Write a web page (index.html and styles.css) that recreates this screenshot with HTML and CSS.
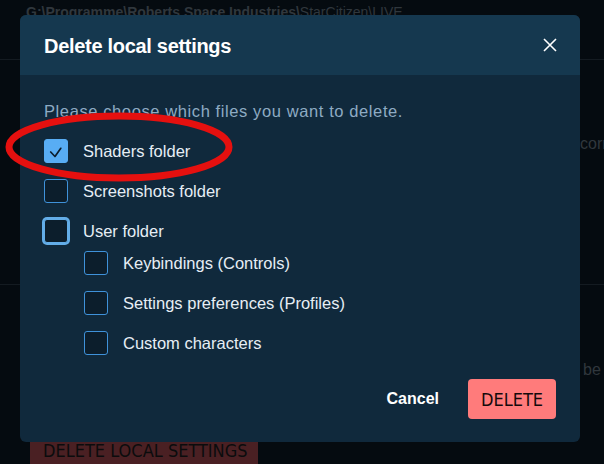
FILE: index.html
```html
<!DOCTYPE html>
<html lang="en">
<head>
    <meta charset="UTF-8">
    <meta name="viewport" content="width=device-width, initial-scale=1.0">
    <title>Delete local settings</title>
    <link rel="stylesheet" href="styles.css">
</head>
<body>
    <div class="app">
        <div class="path"><b>G:\Programme\Roberts Space Industries\</b>StarCitizen\LIVE</div>
        <hr class="rule">
        <div class="note"><span>Removing cached shaders can fix rendering issues and</span><span>corrupted files.</span></div>
        <hr class="rule rule-low">
        <div class="note note-low"><span>Your keybindings and characters will</span><span>be lost.</span></div>
        <button class="btn-reset">DELETE LOCAL SETTINGS</button>
    </div>

    <div class="backdrop">
        <div class="dialog">
            <div class="dialog-head">
                <h2>Delete local settings</h2>
                <button class="close" aria-label="Close">
                    <svg width="14" height="14" viewBox="0 0 14 14"><path d="M1 1 L13 13 M13 1 L1 13" stroke="#fff" stroke-width="1.6" fill="none"/></svg>
                </button>
            </div>
            <div class="dialog-body">
                <p class="intro">Please choose which files you want to delete.</p>
                <div class="options">
                    <label class="option">
                        <span class="box checked">
                            <svg width="24" height="24" viewBox="0 0 24 24"><path d="M6.7 13 L11 17.5 L16.8 9.3" stroke="#0c1f30" stroke-width="1.7" fill="none" stroke-linecap="round" stroke-linejoin="round"/></svg>
                        </span>
                        Shaders folder
                    </label>
                    <label class="option"><span class="box"></span>Screenshots folder</label>
                    <label class="option"><span class="box focus"></span>User folder</label>
                    <div class="options sub">
                        <label class="option"><span class="box"></span>Keybindings (Controls)</label>
                        <label class="option"><span class="box"></span>Settings preferences (Profiles)</label>
                        <label class="option"><span class="box"></span>Custom characters</label>
                    </div>
                </div>
                <div class="actions">
                    <button class="btn-cancel">Cancel</button>
                    <button class="btn-delete">DELETE</button>
                </div>
            </div>
        </div>
    </div>

    <svg class="marker" width="604" height="464" viewBox="0 0 604 464">
        <ellipse cx="119" cy="147" rx="110" ry="31" fill="none" stroke="#e5100f" stroke-width="7"/>
    </svg>
</body>
</html>
```

FILE: styles.css
```css
body {
    margin: 0;
    width: 604px;
    height: 464px;
    overflow: hidden;
    position: relative;
    background-color: #050b10;
    font-family: "Liberation Sans", Arial, sans-serif;
}
button {
    font-family: inherit;
    border: none;
    cursor: pointer;
}

/* page behind the dialog */
.app {
    padding-top: 2px;
    color: #30373d;
}
.path {
    padding-left: 26px;
    font-size: 14px;
    line-height: 20px;
    white-space: nowrap;
}
.rule {
    margin: 37px 0 0;
    border: none;
    border-top: 1px solid #141b21;
}
.rule-low {
    margin-top: 130px;
}
.note {
    display: grid;
    grid-template-columns: 554px 1fr;
    margin-top: 74px;
    padding-left: 26px;
    font-size: 16px;
    line-height: 20px;
    white-space: nowrap;
    overflow: hidden;
}
.note-low {
    grid-template-columns: 557px 1fr;
    margin-top: 75px;
}
.btn-reset {
    display: block;
    margin: 50px 0 0 30px;
    width: 228px;
    height: 40px;
    padding: 0 0 0 13px;
    text-align: left;
    white-space: nowrap;
    overflow: hidden;
    background-color: #4a2023;
    color: #0b0c0d;
    font-family: "DejaVu Sans Condensed", "Liberation Sans", sans-serif;
    font-size: 18px;
}

/* dialog */
.backdrop {
    position: absolute;
    inset: 0;
    padding: 15px 20px 0;
}
.dialog {
    width: 560px;
    height: 427px;
    border-radius: 6px;
    overflow: hidden;
    background-color: #10293c;
    display: flex;
    flex-direction: column;
}
.dialog-head {
    height: 60px;
    background-color: #15384f;
    display: flex;
    align-items: center;
    justify-content: space-between;
    padding: 0 23px 0 24px;
    box-sizing: border-box;
}
.dialog-head h2 {
    margin: 0;
    color: #fff;
    font-size: 20px;
    letter-spacing: -0.3px;
    padding-top: 2px;
}
.close {
    background: none;
    padding: 0;
    width: 14px;
    height: 14px;
    display: flex;
}
.dialog-body {
    flex: 1;
    padding: 26px 24px 0;
}
.intro {
    margin: 0;
    font-size: 16.5px;
    letter-spacing: 0.6px;
    line-height: 20px;
    color: #8eabc3;
}
.options {
    display: flex;
    flex-direction: column;
    gap: 16px;
    margin-top: 18px;
}
.options.sub {
    margin-top: -8px;
    padding-left: 40px;
}
.option {
    display: flex;
    align-items: center;
    gap: 15px;
    height: 24px;
    color: #e6eef5;
    font-size: 16.5px;
}
.box {
    width: 24px;
    height: 24px;
    box-sizing: border-box;
    border: 1px solid #3f92da;
    border-radius: 3px;
    background-color: #0c1e2c;
    flex-shrink: 0;
}
.box.checked {
    border-color: #58adf4;
    background-color: #58adf4;
}
.box.checked svg {
    display: block;
    margin: -1px;
}
.box.focus {
    border-color: #63ade8;
    box-shadow: 0 0 0 2px #63ade8;
}
.actions {
    display: flex;
    justify-content: flex-end;
    align-items: center;
    gap: 21px;
    margin-top: 24px;
}
.btn-cancel {
    background: none;
    color: #fff;
    font-weight: bold;
    font-size: 16px;
    padding: 0 8px;
}
.btn-delete {
    height: 40px;
    width: 88px;
    padding: 0;
    border-radius: 4px;
    background-color: #ff7b7b;
    color: #140a0b;
    font-family: "DejaVu Sans Condensed", "Liberation Sans", sans-serif;
    font-size: 18px;
}

/* red annotation over the screenshot */
.marker {
    position: absolute;
    left: 0;
    top: 0;
    pointer-events: none;
}
```
